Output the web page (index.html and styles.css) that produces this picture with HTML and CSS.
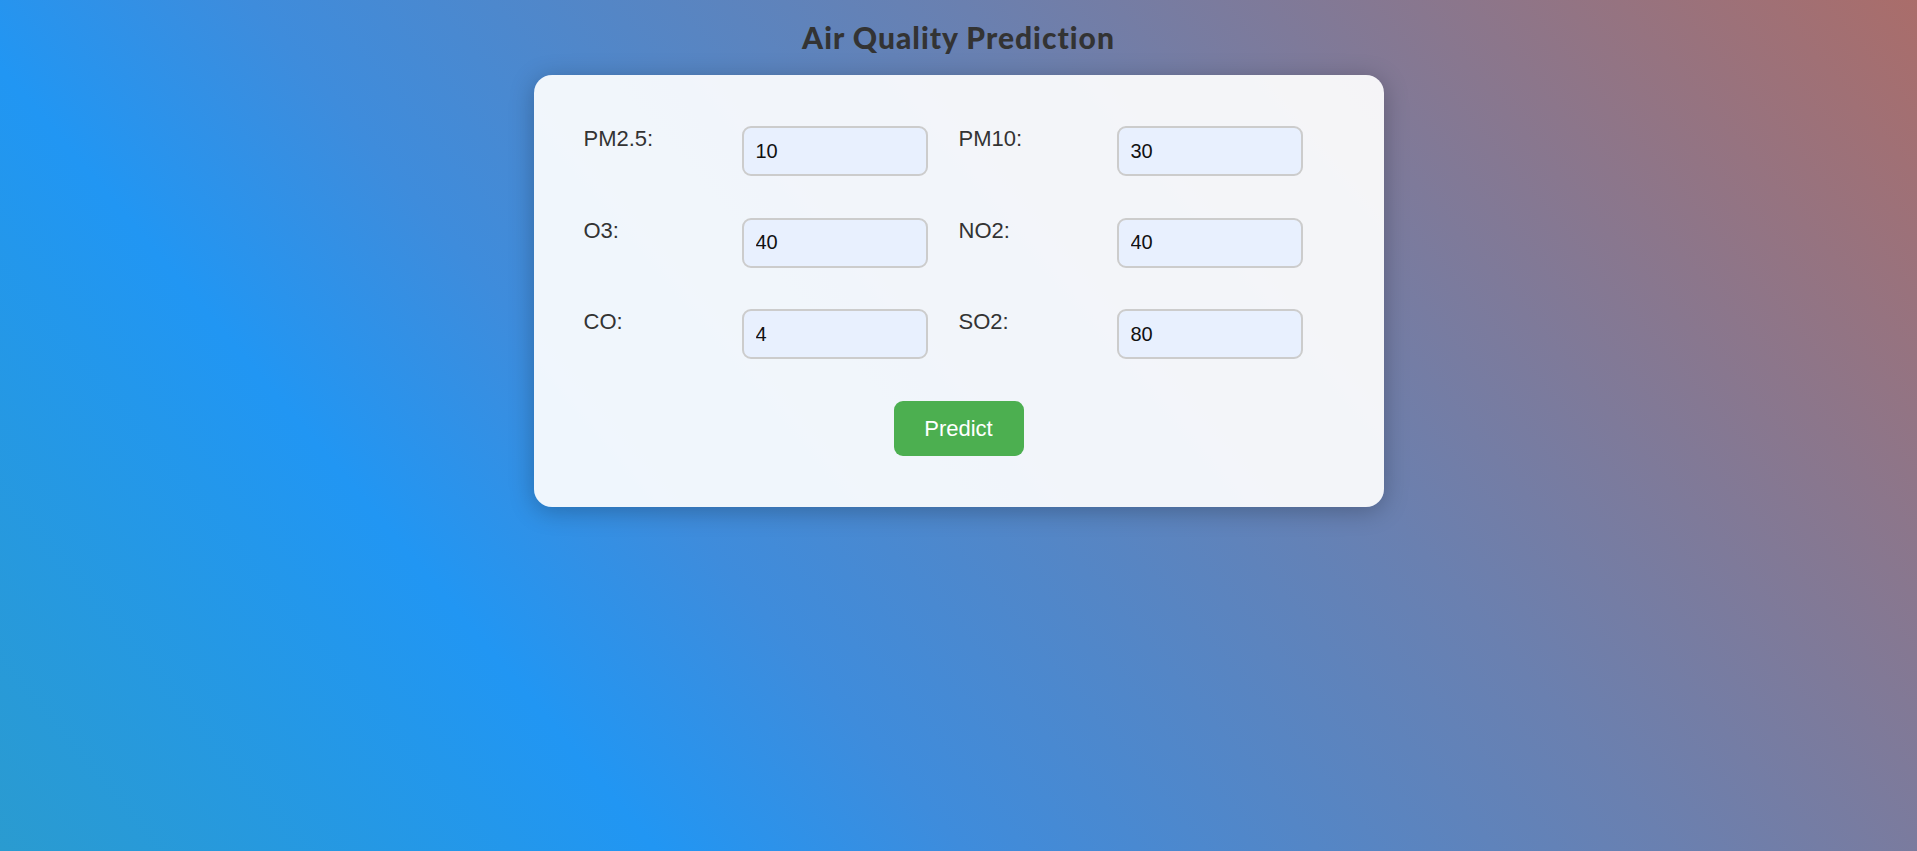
FILE: index.html
```html
<!DOCTYPE html>
<html lang="en">
<head>
<meta charset="utf-8">
<title>Air Quality Prediction</title>
<link rel="stylesheet" href="styles.css">
</head>
<body>
  <h1 class="title">Air Quality Prediction</h1>
  <form class="card">
    <div class="fields">
      <div class="field"><label class="field-label" for="pm25">PM2.5:</label><input class="field-input" id="pm25" type="text" value="10"></div>
      <div class="field"><label class="field-label" for="pm10">PM10:</label><input class="field-input" id="pm10" type="text" value="30"></div>
      <div class="field"><label class="field-label" for="o3">O3:</label><input class="field-input" id="o3" type="text" value="40"></div>
      <div class="field"><label class="field-label" for="no2">NO2:</label><input class="field-input" id="no2" type="text" value="40"></div>
      <div class="field"><label class="field-label" for="co">CO:</label><input class="field-input" id="co" type="text" value="4"></div>
      <div class="field"><label class="field-label" for="so2">SO2:</label><input class="field-input" id="so2" type="text" value="80"></div>
    </div>
    <div class="actions">
      <button class="predict-btn" type="button">Predict</button>
    </div>
  </form>
</body>
</html>
```

FILE: styles.css
```css
html, body {
  margin: 0;
  padding: 0;
}

body {
  min-height: 100vh;
  display: flex;
  flex-direction: column;
  align-items: center;
  font-family: "Liberation Sans", Arial, sans-serif;
  color: #333;
  background: linear-gradient(50deg,
    #2a9bd0 0%,
    #2196f3 25%,
    #3e8cdc 36.6%,
    #6a80b0 63.6%,
    #aa6d6a 100%);
  background-attachment: fixed;
}

.title {
  margin: 19px 0 19.5px;
  font-family: "Lato", "Liberation Sans", sans-serif;
  font-weight: 900;
  font-size: 30px;
  line-height: 36px;
  color: #333;
  letter-spacing: 1px;
}

.card {
  width: 850px;
  box-sizing: border-box;
  padding: 51.5px 50px 51px;
  background: rgba(255, 255, 255, 0.92);
  border-radius: 18px;
  box-shadow: 0 4px 24px rgba(0, 0, 0, 0.25);
}

.fields {
  display: grid;
  grid-template-columns: 375px 375px;
  row-gap: 41.7px;
}

.field {
  display: flex;
  align-items: flex-start;
}

.field-label {
  width: 158px;
  flex: none;
  font-size: 22px;
  line-height: 24px;
  padding-top: 1px;
  color: #333;
}

.field-input {
  width: 186px;
  height: 50px;
  box-sizing: border-box;
  padding: 0 12px;
  border: 2px solid #ccc;
  border-radius: 9px;
  background: #e8f0fe;
  font-family: "Liberation Sans", Arial, sans-serif;
  font-size: 20px;
  color: #111;
  outline: none;
}

.actions {
  display: flex;
  justify-content: center;
  margin-top: 41.5px;
}

.predict-btn {
  width: 130px;
  height: 55.5px;
  border: none;
  border-radius: 9px;
  background: #4caf50;
  color: #fff;
  font-family: "Liberation Sans", Arial, sans-serif;
  font-size: 22px;
  cursor: pointer;
}
```
